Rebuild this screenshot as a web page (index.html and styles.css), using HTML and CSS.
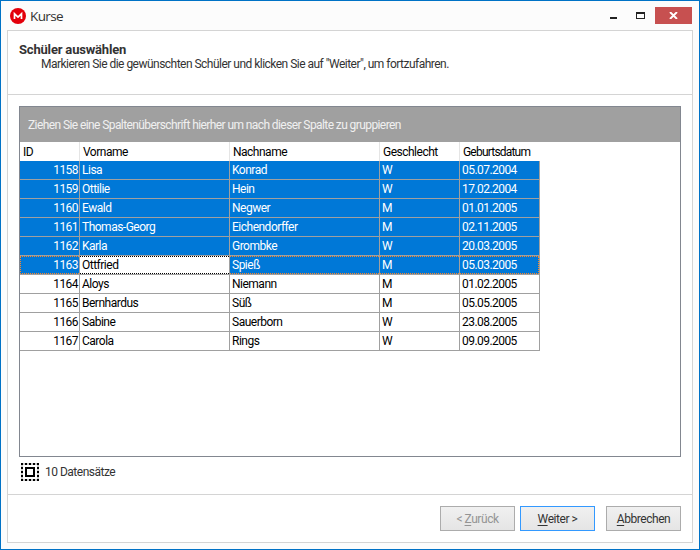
FILE: index.html
```html
<!DOCTYPE html>
<html lang="de">
<head>
<meta charset="utf-8">
<title>Kurse</title>
<link rel="stylesheet" href="styles.css">
</head>
<body>
<div class="window">
  <header class="titlebar">
    <svg class="logo" width="16" height="16" viewBox="0 0 16 16"><circle cx="8" cy="8" r="8" fill="#e3000b"/><path d="M4.5 11V5.8L8 9.1l3.5-3.3V11" fill="none" stroke="#fff" stroke-width="1.7"/></svg>
    <span class="caption">Kurse</span>
    <div class="controls">
      <span class="min"></span>
      <span class="max"></span>
      <span class="close"><svg width="9" height="7" viewBox="0 0 9 7"><path d="M1 0l7 7M8 0L1 7" stroke="#fff" stroke-width="1.9" fill="none"/></svg></span>
    </div>
  </header>
  <main class="frame">
    <section class="intro">
      <h1>Schüler auswählen</h1>
      <p>Markieren Sie die gewünschten Schüler und klicken Sie auf "Weiter", um fortzufahren.</p>
    </section>
    <section class="content">
      <div class="grid">
        <div class="group">Ziehen Sie eine Spaltenüberschrift hierher um nach dieser Spalte zu gruppieren</div>
        <div class="row head"><span>ID</span><span>Vorname</span><span>Nachname</span><span>Geschlecht</span><span>Geburtsdatum</span></div>
        <div class="row sel"><span>1158</span><span>Lisa</span><span>Konrad</span><span>W</span><span>05.07.2004</span></div>
        <div class="row sel"><span>1159</span><span>Ottilie</span><span>Hein</span><span>W</span><span>17.02.2004</span></div>
        <div class="row sel"><span>1160</span><span>Ewald</span><span>Negwer</span><span>M</span><span>01.01.2005</span></div>
        <div class="row sel"><span>1161</span><span>Thomas-Georg</span><span>Eichendorffer</span><span>M</span><span>02.11.2005</span></div>
        <div class="row sel"><span>1162</span><span>Karla</span><span>Grombke</span><span>W</span><span>20.03.2005</span></div>
        <div class="row sel focus"><span>1163</span><span class="cell">Ottfried</span><span>Spieß</span><span>M</span><span>05.03.2005</span></div>
        <div class="row"><span>1164</span><span>Aloys</span><span>Niemann</span><span>M</span><span>01.02.2005</span></div>
        <div class="row"><span>1165</span><span>Bernhardus</span><span>Süß</span><span>M</span><span>05.05.2005</span></div>
        <div class="row"><span>1166</span><span>Sabine</span><span>Sauerborn</span><span>W</span><span>23.08.2005</span></div>
        <div class="row"><span>1167</span><span>Carola</span><span>Rings</span><span>W</span><span>09.09.2005</span></div>
      </div>
      <div class="status">
        <svg width="18" height="18" viewBox="0 0 18 18"><rect x="1" y="1" width="16" height="16" fill="none" stroke="#ccc" stroke-width="2"/><rect x="1" y="1" width="16" height="16" fill="none" stroke="#000" stroke-width="2" stroke-dasharray="2 2" stroke-dashoffset="1"/><rect x="5" y="5" width="8" height="8" fill="none" stroke="#000" stroke-width="2"/></svg>
        <span>10 Datensätze</span>
      </div>
    </section>
    <footer class="actions">
      <button class="back" disabled>&lt; <u>Z</u>urück</button>
      <button class="next"><u>W</u>eiter &gt;</button>
      <button class="cancel"><u>A</u>bbrechen</button>
    </footer>
  </main>
</div>
</body>
</html>
```

FILE: styles.css
```css
* { box-sizing: border-box; }
body { margin: 0; font-family: Roboto, sans-serif; font-size: 12px; letter-spacing: -0.5px; color: #333; }
.window { width: 700px; height: 550px; border: 1px solid #0072c6; background: #fcfcfc; display: flex; flex-direction: column; padding: 0 6px 6px; }
.titlebar { height: 29px; display: flex; align-items: center; padding-left: 3px; flex: none; }
.caption { font-family: "Open Sans", sans-serif; font-size: 13.5px; margin-left: 4px; letter-spacing: -0.6px; flex: 1; line-height: 20px; }
.controls { display: flex; align-self: flex-start; margin: 6px 1px 0 0; height: 17px; }
.min { width: 7px; height: 2px; background: #222; margin: 10px 19px 0 0; }
.max { width: 9px; height: 7px; border: 1px solid #222; border-top-width: 2px; margin: 5px 10px 0 0; }
.close { width: 37px; background: #c75050; display: flex; align-items: center; justify-content: center; }
.frame { flex: 1; border: 1px solid #d4d4d4; background: #fff; display: flex; flex-direction: column; }
.intro { height: 64px; border-bottom: 1px solid #d4d4d4; padding: 11px 11px 0; }
h1 { font-size: 13px; letter-spacing: -0.18px; line-height: 15px; margin: 0; }
p { margin: 0 0 0 22px; line-height: 15px; letter-spacing: -0.52px; }
.content { flex: 1; padding: 11px 11px 0; }
.grid { height: 351px; border: 1px solid #828790; background: #fff; color: #000; }
.group { height: 35px; background: #a0a0a0; color: #f0f0f0; line-height: 37px; padding-left: 8px; letter-spacing: -0.59px; }
.row { display: grid; grid-template-columns: 60px 150px 150px 80px 80px; width: 520px; height: 19px; line-height: 18px; }
.row span { border-right: 1px solid #a0a0a0; border-bottom: 1px solid #a0a0a0; padding-left: 2px; white-space: nowrap; }
.row:not(.head) span:first-child { text-align: right; padding-right: 1px; }
.row:not(.head) span:first-child, .row:not(.head) span:last-child { letter-spacing: -0.55px; }
.head span { border-bottom: 0; border-right-color: #e5e5e5; padding-left: 3px; line-height: 20px; }
.head span:last-child { border-right: 0; letter-spacing: -0.8px; }
.sel { background: #0078d7; color: #fff; }
.focus { position: relative; }
.focus::before { content: ""; position: absolute; inset: 0 1px 1px 0; border: 1px dotted #ff8728; }
.focus .cell { position: relative; background: #fff; color: #000; }
.cell::after { content: ""; position: absolute; inset: 0; border: dotted #000; border-width: 1px 0; }
.status { display: flex; gap: 6px; align-items: center; padding: 6px 0 0 2px; }
.actions { height: 48px; border-top: 1px solid #d4d4d4; display: flex; justify-content: flex-end; padding: 11px 11px 0 0; }
button { width: 75px; height: 25px; border: 1px solid #acacac; background: linear-gradient(#f0f0f0, #e5e5e5); font: 12px Roboto, sans-serif; letter-spacing: -0.45px; color: #333; padding: 0; }
.back { color: #949494; margin-right: 5px; }
.next { border-color: #3399ff; margin-right: 11px; }
u { text-underline-offset: 2px; }
```
